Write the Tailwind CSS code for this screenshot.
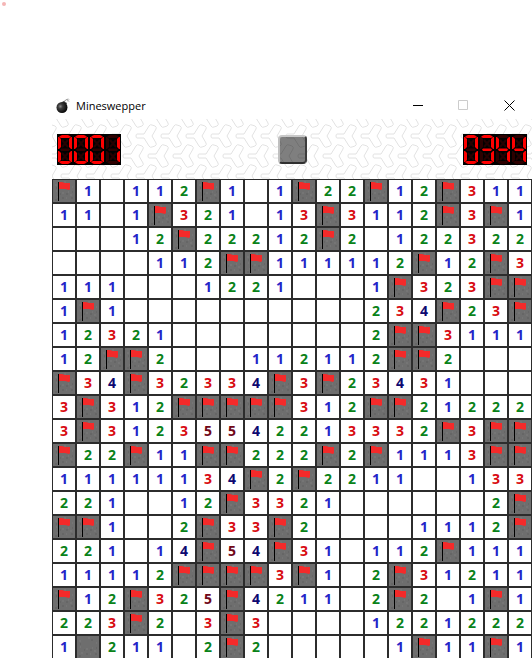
<!DOCTYPE html>
<html lang="en">
<head>
<meta charset="utf-8">
<meta name="viewport" content="width=device-width, initial-scale=1">
<title>Mineswepper</title>
<script src="https://cdn.jsdelivr.net/npm/@tailwindcss/browser@4"></script>
</head>
<body class="relative h-screen overflow-hidden bg-white font-['Open_Sans','Noto_Sans',sans-serif] text-black">
<span class="absolute left-0.5 top-0.5 size-1 rounded-full bg-[#f5b5b5]"></span>

<svg class="hidden" aria-hidden="true">
  <symbol id="stone" viewBox="0 0 22 22">
    <rect width="22" height="22" fill="#6e6e6e"/>
    <path d="M2 5h2M11 2h2M17 15h2M4 17h2M13 18h1M19 7h1M9 13h2M15 12h1M3 11h1" stroke="#7c7c7c"/>
    <path d="M3 8h1M14 4h2M9 18h2M18 18h2M13 14h2M19 12h1M2 20h2M7 14h1" stroke="#5f5f5f"/>
  </symbol>
  <symbol id="flag" viewBox="0 0 22 22">
    <use href="#stone"/>
    <path d="M5 2h1v19H5z" fill="#000"/>
    <path d="M6 2h3l3 1h5v6l-1 1-4-1H6z" fill="#f42a2a"/>
  </symbol>
</svg>

<main class="flex flex-col pt-23 pl-13">
  <header class="flex h-[27px] items-center">
    <svg class="ml-[3px] size-4" viewBox="0 0 16 16" aria-hidden="true">
      <defs><radialGradient id="shine" cx=".35" cy=".4" r=".6"><stop offset="0" stop-color="#8a8a8a"/><stop offset=".35" stop-color="#3c3c3c"/><stop offset="1" stop-color="#0c0c0c"/></radialGradient></defs>
      <path d="M9 5c1-3 2-4 4-3" fill="none" stroke="#777"/>
      <path d="M13 0v4M11.500 1l3 3M14.500 1l-2 2" stroke="#aaa" stroke-width=".5"/>
      <path d="M8 3l4 2-1 2-4-2z" fill="#333"/>
      <circle cx="7" cy="9.500" r="5.500" fill="url(#shine)"/>
    </svg>
    <h1 class="ml-[5px] flex-1 text-[11px] leading-4">Mineswepper</h1>
    <button aria-label="Minimize" class="flex h-full w-[46px] items-center justify-center"><svg class="size-[11px]" viewBox="0 0 11 11"><path d="M0 5.500h10" stroke="#000"/></svg></button>
    <button aria-label="Maximize" disabled class="flex h-full w-[45px] items-center justify-center"><svg class="size-[11px]" viewBox="0 0 11 11"><path d="M.5.5h9v9h-9z" fill="none" stroke="#ccc"/></svg></button>
    <button aria-label="Close" class="flex h-full w-[46px] items-center justify-center"><svg class="size-[11px]" viewBox="0 0 11 11"><path d="M.5.5l10 10M10.500.5l-10 10" stroke="#000"/></svg></button>
  </header>

  <section class="relative flex h-15 items-center justify-between px-[5px]">
    <svg class="absolute inset-0 size-full" aria-hidden="true">
      <defs>
        <path id="spoke" d="M1 -2H8L13 -10Q14 -12 16 -11L19 -10Q21 -9 20 -7L16 0L20 7Q21 9 19 10L16 11Q14 12 13 10L8 2H1Q0 2 0 0Q0 -2 1 -2z"/>
        <pattern id="tri" width="25" height="40" patternUnits="userSpaceOnUse">
          <g fill="none" stroke="#e2e2e2">
            <use href="#spoke" x="-16" y="17"/><use href="#spoke" x="9" y="17"/>
            <use href="#spoke" x="-4" y="37"/><use href="#spoke" x="21" y="37"/>
            <use href="#spoke" x="-4" y="-3"/><use href="#spoke" x="21" y="-3"/>
          </g>
        </pattern>
      </defs>
      <rect width="100%" height="100%" fill="url(#tri)"/>
    </svg>
    <div id="mines" role="img" aria-label="0001" class="relative flex bg-black"></div>
    <button aria-label="New game" class="relative size-[29px] rounded-[4px] border-2 border-t-[#c8c8c8] border-r-[#3c3c3c] border-b-[#303030] border-l-[#c0c0c0] bg-black/50"></button>
    <div id="time" role="img" aria-label="0344" class="relative flex bg-black"></div>
  </section>

  <section id="board" aria-label="Minefield" class="grid grid-cols-[repeat(20,24px)] auto-rows-[24px]"></section>
</main>

<script>
const rows = [
  "F1.112F1.1F22F12F311",
  "11.1F321.13F3112F3F1",
  "...12F22212F2.122322",
  "....112FF111112F12F3",
  "111...1221...1F323FF",
  "1F1..........234F23F",
  "12321........2FF3111",
  "12FF2...112112FF2...",
  "F34F32334F3F23431...",
  "3F312FFFFF312FF21222",
  "3F31235542213332F3FF",
  "F22F11FF222F2F1113FF",
  "11111134F2F2211..133",
  "221..12F3321......2F",
  "FF1..2F33F2....1112F",
  "221.14F54F31.112F111",
  "11112FFFF3F1.2F31211",
  "F12F325F4211.2F2.1F1",
  "223F2.3F3....1221222",
  "1#211.2F2.....1F11F1"
];
const color = { 1: "text-[#2424c8]", 2: "text-[#0a8218]", 3: "text-[#d80a10]", 4: "text-[#0e0870]", 5: "text-[#700818]" };
const icon = id => `<svg class="size-[22px]" aria-hidden="true"><use href="#${id}"/></svg>`;
document.getElementById("board").innerHTML = rows.join("").split("").map(c => {
  const base = "flex items-center justify-center border border-[#2c2c2c] text-[14px] leading-5 font-bold";
  if (c === "F") return `<button aria-label="Flag" class="${base}">${icon("flag")}</button>`;
  if (c === "#") return `<button aria-label="Covered" class="${base}">${icon("stone")}</button>`;
  if (c === ".") return `<button aria-label="Empty" class="${base}"></button>`;
  return `<button class="${base} ${color[c]}">${c}</button>`;
}).join("");

const segments = {
  a: "M5 1h6l2 1 1 1-2 1H4L2 3l1-1z", b: "M14 3h1v12h-1l-2-2V5z", c: "M14 17h1v11h-1l-2-2v-7z",
  d: "M4 27h8l2 1-1 1-2 1H5l-2-1-1-1z", e: "M2 17H1v11h1l2-2v-7z", f: "M2 3H1v12h1l2-2V5z", g: "M4 14.500h8l1 1-1 1.500H4l-1-1.500z"
};
const lit = { 0: "abcdef", 1: "bc", 3: "abcdg", 4: "bcfg" };
for (const id of ["mines", "time"]) {
  const el = document.getElementById(id);
  el.innerHTML = [...el.getAttribute("aria-label")].map(n =>
    `<svg class="h-[31px] w-4" viewBox="0 0 16 31"><path d="M5 6l6 7M11 6l-6 7M5 19l6 7M11 19l-6 7" stroke="#260000" stroke-width="2"/>` +
    Object.entries(segments)
      .sort(([p], [q]) => lit[n].includes(p) - lit[n].includes(q))
      .map(([k, d]) => `<path d="${d}" fill="${lit[n].includes(k) ? "#ff0000" : "#2c0000"}"/>`).join("") + `</svg>`
  ).join("");
}
</script>
</body>
</html>
